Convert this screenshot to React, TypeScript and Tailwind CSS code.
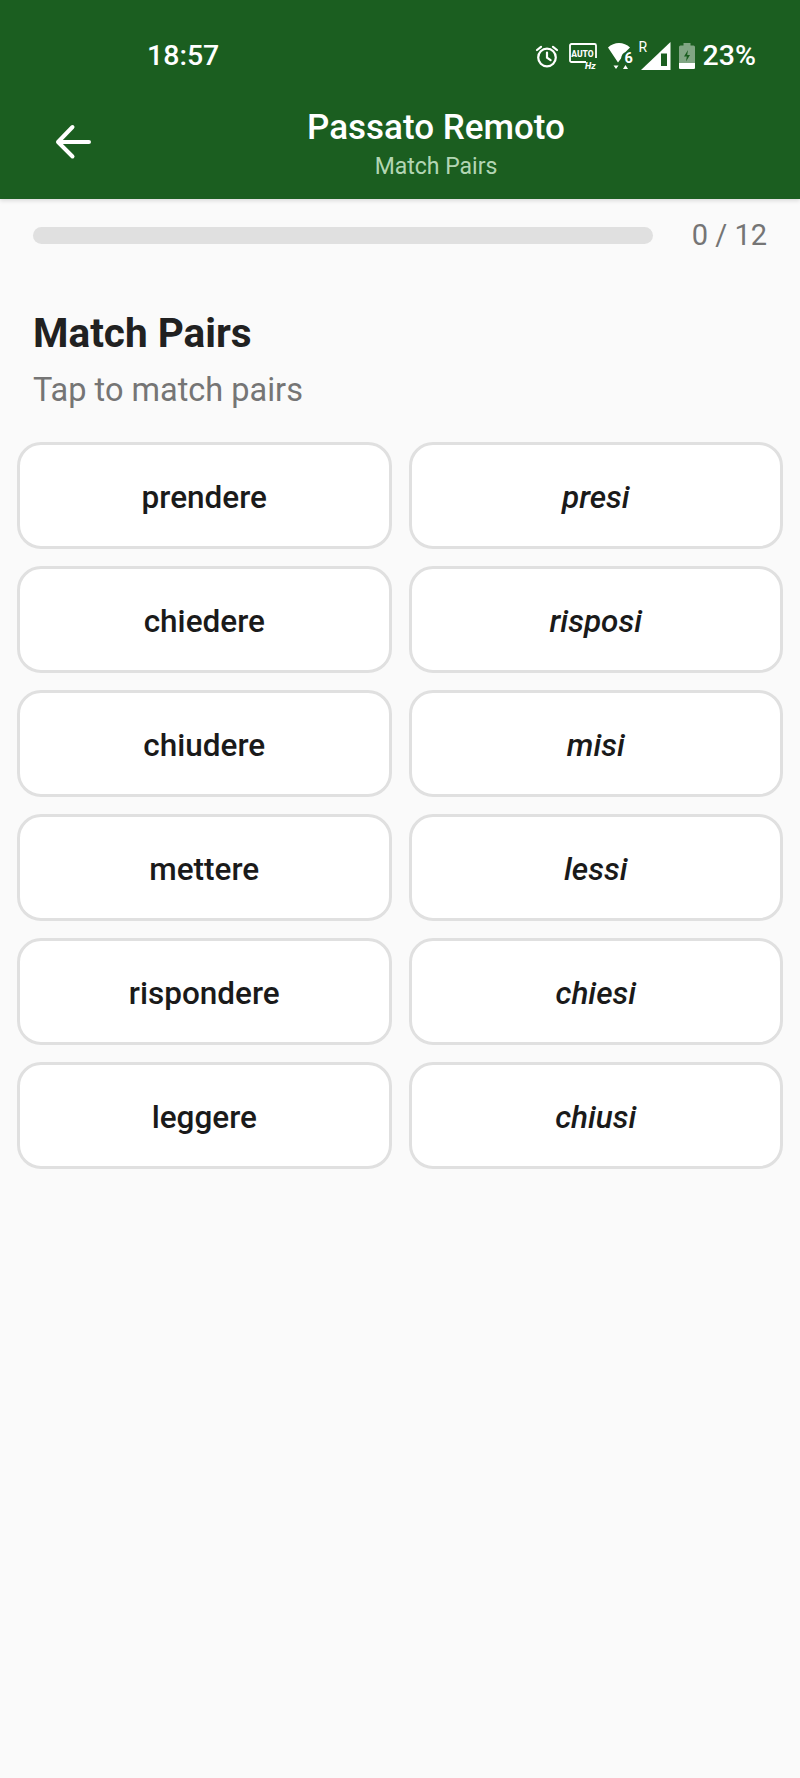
const LEFT = ['prendere', 'chiedere', 'chiudere', 'mettere', 'rispondere', 'leggere'];
const RIGHT = ['presi', 'risposi', 'misi', 'lessi', 'chiesi', 'chiusi'];

function AlarmIcon() {
  return (
    <svg width="24" height="24" viewBox="0 0 24 24" fill="none" stroke="white" strokeWidth="2.200" strokeLinecap="round">
      <circle cx="12" cy="13.500" r="8.800" />
      <path d="M12 8.500v5.200l3.600 2.400M2 6l4-3.200M22 6l-4-3.200" />
    </svg>
  );
}

function AutoHzIcon() {
  return (
    <svg width="28" height="26" viewBox="0 0 28 26" fill="none">
      <path d="M17 19H2.500A1.500 1.500 0 0 1 1 17.500V2.500A1.500 1.500 0 0 1 2.500 1h23A1.500 1.500 0 0 1 27 2.500V15" stroke="white" strokeWidth="1.800" />
      <text x="13.500" y="13.500" textAnchor="middle" fill="white" fontSize="8.500" fontWeight="800" fontFamily="Roboto, sans-serif">AUTO</text>
      <text x="16" y="25.500" fill="white" fontSize="9" fontWeight="800" fontStyle="italic" fontFamily="Roboto, sans-serif">Hz</text>
    </svg>
  );
}

function WifiIcon() {
  return (
    <svg width="28" height="28" viewBox="0 0 28 28" fill="white">
      <path d="M0 5.500C3 2.500 7 1 11 1s8 1.500 11 4.500L17.500 10C15 11 13.500 13 13 16.500L10 20.500Z" />
      <path d="M5.500 23.500h5L8 27ZM15 27l2.500-4 2.500 4Z" />
      <text x="16.500" y="20.500" fontSize="14.500" fontWeight="700" fontFamily="Roboto, sans-serif">6</text>
    </svg>
  );
}

function SignalIcon() {
  return (
    <svg width="30" height="28" viewBox="0 0 30 28">
      <path d="M0 28 29.500 0v28Z" fill="white" />
      <path d="M20 11.500h6V24h-6Z" fill="#1b5e20" />
    </svg>
  );
}

function BatteryIcon() {
  return (
    <svg width="16" height="26" viewBox="0 0 16 26">
      <path d="M4.500 0h7v2.500h3a1.500 1.500 0 0 1 1.500 1.500v20.500a1.500 1.500 0 0 1-1.500 1.500h-13A1.500 1.500 0 0 1 0 24.500V4a1.500 1.500 0 0 1 1.500-1.500h3Z" fill="white" fillOpacity="0.45" />
      <path d="M0 20h16v4.500a1.500 1.500 0 0 1-1.500 1.500h-13A1.500 1.500 0 0 1 0 24.500Z" fill="white" />
      <path d="M9 7 5 13.500h2.800L7 18.500l4-6.500H8.200Z" fill="#1b5e20" />
    </svg>
  );
}

function StatusBar() {
  return (
    <div className="flex h-[112px] items-center justify-between pl-[147px] pr-[44px] text-white">
      <span className="text-[28.500px] font-medium leading-none">18:57</span>
      <div className="flex items-center">
        <AlarmIcon />
        <span className="ml-[10px]"><AutoHzIcon /></span>
        <span className="ml-[11px]"><WifiIcon /></span>
        <span className="relative z-10 -mt-[18px] ml-[3px] w-0 text-[14px] leading-none">R</span>
        <span className="ml-[2px]"><SignalIcon /></span>
        <span className="ml-[8px]"><BatteryIcon /></span>
        <span className="ml-[8px] text-[28.500px] font-medium leading-none">23%</span>
      </div>
    </div>
  );
}

function Header() {
  return (
    <header className="relative z-10 h-[199px] bg-[#1b5e20] shadow-[0_2px_4px_rgba(0,0,0,0.12)]">
      <StatusBar />
      <div className="relative -mt-[4px] flex flex-col items-center pl-[72px]">
        <button className="absolute left-[53px] top-[14px] text-white">
          <svg width="40" height="40" viewBox="0 0 40 40" fill="none" stroke="white" strokeWidth="4" strokeLinecap="round" strokeLinejoin="round">
            <path d="M5 20h31M19.500 5 5 20l14.500 14.500" />
          </svg>
        </button>
        <h1 className="text-[35px] font-medium leading-[40px] text-white">Passato Remoto</h1>
        <p className="mt-[6px] text-[23px] leading-[26px] text-[#c8e6c9]/90">Match Pairs</p>
      </div>
    </header>
  );
}

function PairCard({ label, italic }: { label: string; italic?: boolean }) {
  return (
    <button className={`h-[107px] rounded-[24px] border-[3px] border-[#e0e0e0] bg-white pt-[4px] text-[31.500px] font-medium text-[#1a1a1a] ${italic ? 'italic' : ''}`}>
      {label}
    </button>
  );
}

export default function App() {
  return (
    <div className="min-h-[1778px] bg-[#fafafa] font-['Roboto',sans-serif]">
      <Header />

      <div className="flex items-center pl-[33px] pr-[33px] pt-[18px]">
        <div className="h-[17px] w-[620px] rounded-full bg-[#e0e0e0]" />
        <span className="ml-auto text-[29px] leading-[36px] text-[#757575]">0 / 12</span>
      </div>

      <div className="px-[33px] pt-[55px]">
        <h2 className="text-[40.500px] font-bold leading-[50px] text-[#212121]">Match Pairs</h2>
        <p className="mt-[10px] text-[32.500px] leading-[44px] text-[#757575]">Tap to match pairs</p>
      </div>

      <div className="mt-[30px] grid grid-cols-2 gap-x-[17px] gap-y-[17px] px-[17px]">
        {LEFT.map((word, i) => (
          <div key={word} className="contents">
            <PairCard label={word} />
            <PairCard label={RIGHT[i]} italic />
          </div>
        ))}
      </div>
    </div>
  );
}
